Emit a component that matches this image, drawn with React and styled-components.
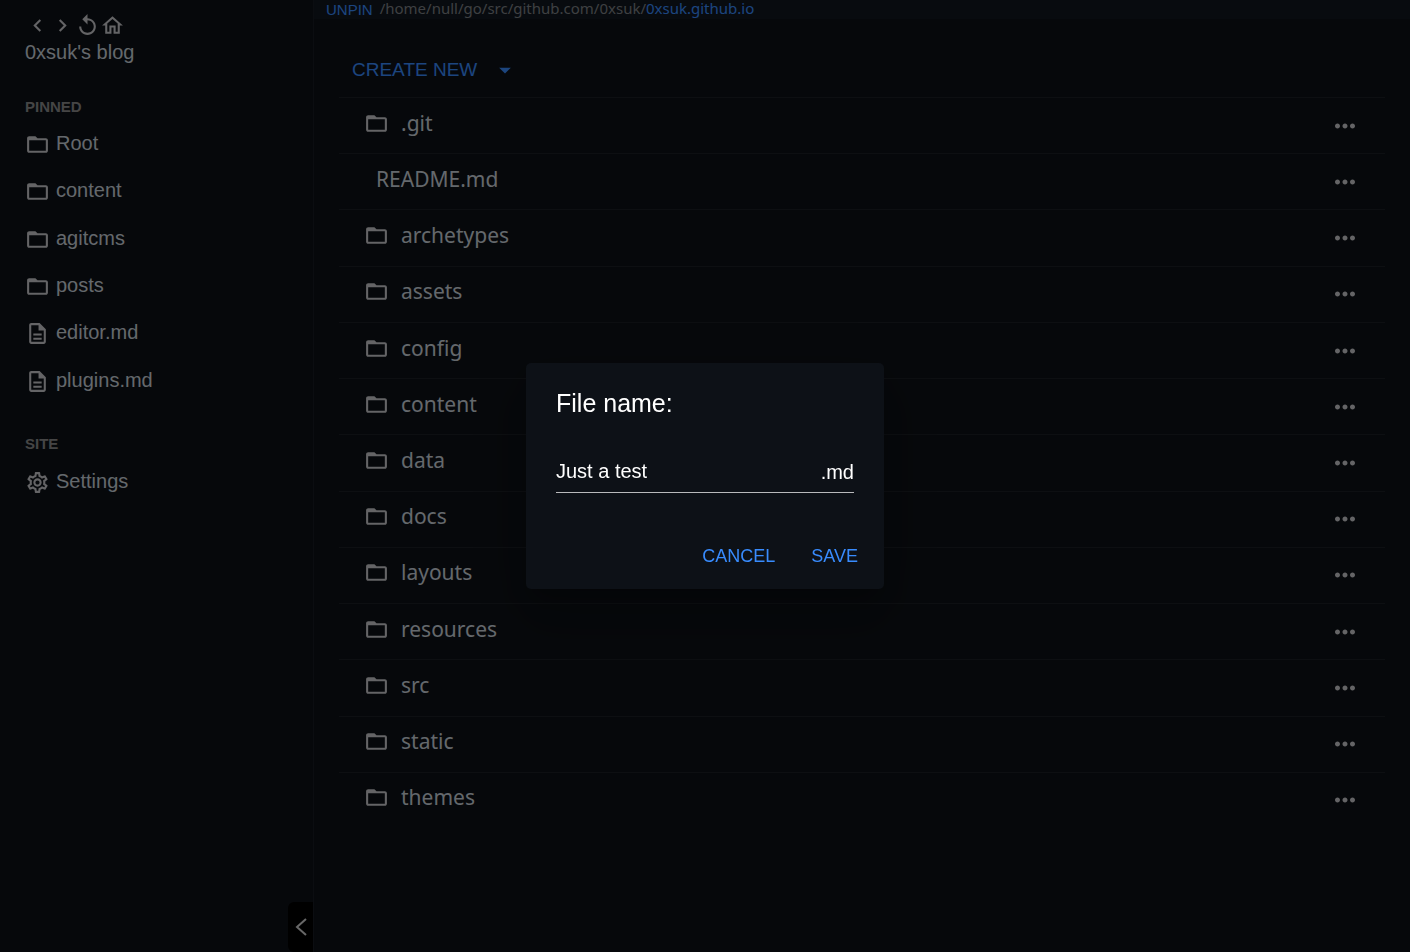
import React, { useState } from "react";
import styled, { createGlobalStyle } from "styled-components";
import {
  MdNavigateBefore,
  MdNavigateNext,
  MdReplay,
  MdOutlineHome,
  MdOutlineDescription,
  MdOutlineSettings,
  MdMoreHoriz,
  MdArrowDropDown,
} from "react-icons/md";

const sans = '"Liberation Sans", Arial, sans-serif';
const humanist = '"Noto Sans", sans-serif';

const GlobalStyle = createGlobalStyle`
  *, *::before, *::after { box-sizing: border-box; }
  body {
    margin: 0;
    background: #0d1117;
    color: #c9d1d9;
    font-family: ${sans};
    font-size: 20px;
  }
  a { color: inherit; text-decoration: none; }
  ul { list-style: none; margin: 0; padding: 0; }
  button {
    border: 0;
    padding: 0;
    background: none;
    color: inherit;
    font: inherit;
    cursor: pointer;
  }
  svg { display: block; flex: none; }
`;

const Layout = styled.div`
  display: flex;
  min-height: 100vh;
`;

const Sidebar = styled.aside`
  display: flex;
  flex-direction: column;
  flex: none;
  width: 314px;
  padding-top: 13px;
  border-right: 1px solid #161b22;
`;

const SidebarBody = styled.div`
  padding: 0 25px;
`;

const NavButtons = styled.div`
  display: flex;
  color: #c8c8cc;
`;

const SiteTitle = styled.div`
  padding-bottom: 1px;
  line-height: 28px;
`;

const SectionTitle = styled.h2`
  margin: 28px 0 1px;
  font-size: 15px;
  line-height: 24px;
  font-weight: bold;
  color: #8b8b8b;
`;

const LinkList = styled.ul`
  display: grid;
  grid-auto-rows: 1fr;
  min-height: ${(p) => p.$height}px;
`;

const SideLink = styled.a`
  display: flex;
  align-items: center;
  gap: 6px;
  height: 100%;

  svg {
    margin-top: 2px;
    color: #c8c8cc;
  }
`;

const CollapseButton = styled.button`
  display: flex;
  align-items: center;
  justify-content: center;
  align-self: flex-end;
  width: 25px;
  height: 50px;
  margin-top: auto;
  border-radius: 6px 0 0 6px;
  background: #000;
`;

const Main = styled.main`
  flex: 1;
  min-width: 0;
`;

const PathBar = styled.div`
  display: flex;
  align-items: center;
  height: 19px;
  padding-left: 12px;
  background: #11171e;
  font-family: ${humanist};
  font-size: 15px;
  line-height: 16px;
  color: #7d8085;
`;

const PathText = styled.span`
  padding-bottom: 3px;
`;

const PinButton = styled.button`
  margin-right: 7px;
  font-family: ${sans};
  font-size: 15px;
  line-height: 19px;
  color: #388bfd;
`;

const CurrentFolder = styled.a`
  padding-bottom: 3px;
  color: #388bfd;
`;

const Content = styled.div`
  padding: 30px 25px;
`;

const CreateButton = styled.button`
  display: flex;
  align-items: center;
  gap: 14px;
  height: 42px;
  margin-bottom: 6px;
  padding-left: 13px;
  font-size: 19px;
  color: #388bfd;
`;

const FileList = styled.ul`
  display: grid;
  grid-auto-rows: 1fr;
  min-height: 731px;
`;

const FileRow = styled.li`
  display: flex;
  align-items: center;
  justify-content: space-between;
  padding: 0 25px;
  border-top: 1px solid #1a1e24;
`;

const FileLink = styled.a`
  display: flex;
  align-items: center;
  flex: 1;
  padding-bottom: 5px;
  font-family: ${humanist};
  font-size: 21px;
  line-height: 30px;
`;

const FileName = styled.span`
  margin-left: 12px;
  padding-bottom: 1px;
`;

const MoreButton = styled.button`
  color: #c8c8cc;
`;

const Backdrop = styled.div`
  position: fixed;
  inset: 0;
  display: flex;
  align-items: center;
  justify-content: center;
  background: rgba(0, 0, 0, 0.5);
`;

const Dialog = styled.form`
  width: 358px;
  padding: 20px 18px 15px 30px;
  border-radius: 5px;
  background: #0d1117;
  color: #fff;
  box-shadow: 0 14px 19px -9px rgba(0, 0, 0, 0.2),
    0 30px 48px 4px rgba(0, 0, 0, 0.14), 0 11px 58px 10px rgba(0, 0, 0, 0.12);
`;

const DialogTitle = styled.label`
  display: block;
  font-size: 25px;
  line-height: 40px;
`;

const Field = styled.div`
  display: flex;
  align-items: center;
  height: 40px;
  margin: 30px 12px 0 0;
  border-bottom: 1px solid #b9babc;
`;

const NameInput = styled.input`
  flex: 1;
  min-width: 0;
  padding: 0 0 3px;
  border: 0;
  outline: 0;
  background: none;
  color: inherit;
  font: inherit;
`;

const Actions = styled.div`
  display: flex;
  justify-content: flex-end;
  gap: 20px;
  margin-top: 46px;
`;

const DialogButton = styled.button`
  height: 35px;
  padding: 0 8px;
  font-size: 18px;
  color: #388bfd;
`;

function FolderIcon({ size = 25 }) {
  return (
    <svg width={size} height={size} viewBox="0 0 24 24" fill="#c8c8cc" aria-hidden="true">
      <path d="M20 6h-8l-2-2H4c-1.1 0-1.99.9-1.99 2L2 18c0 1.1.9 2 2 2h16c1.1 0 2-.9 2-2V8c0-1.1-.9-2-2-2zm0 12H4V8h16v10z" />
    </svg>
  );
}

const pinned = [
  { name: "Root", icon: FolderIcon },
  { name: "content", icon: FolderIcon },
  { name: "agitcms", icon: FolderIcon },
  { name: "posts", icon: FolderIcon },
  { name: "editor.md", icon: MdOutlineDescription },
  { name: "plugins.md", icon: MdOutlineDescription },
];

const files = [
  { name: ".git", folder: true },
  { name: "README.md", folder: false },
  { name: "archetypes", folder: true },
  { name: "assets", folder: true },
  { name: "config", folder: true },
  { name: "content", folder: true },
  { name: "data", folder: true },
  { name: "docs", folder: true },
  { name: "layouts", folder: true },
  { name: "resources", folder: true },
  { name: "src", folder: true },
  { name: "static", folder: true },
  { name: "themes", folder: true },
];

function SidebarItem({ name, icon: Icon }) {
  return (
    <li>
      <SideLink href="#">
        <Icon size={25} />
        {name}
      </SideLink>
    </li>
  );
}

function NewFileDialog() {
  const [name, setName] = useState("Just a test");
  return (
    <Backdrop>
      <Dialog
        role="dialog"
        aria-modal="true"
        aria-labelledby="file-name-label"
        onSubmit={(e) => e.preventDefault()}
      >
        <DialogTitle id="file-name-label" htmlFor="file-name">
          File name:
        </DialogTitle>
        <Field>
          <NameInput
            id="file-name"
            type="text"
            autoComplete="off"
            spellCheck={false}
            value={name}
            onChange={(e) => setName(e.target.value)}
          />
          <span>.md</span>
        </Field>
        <Actions>
          <DialogButton type="button">CANCEL</DialogButton>
          <DialogButton type="submit">SAVE</DialogButton>
        </Actions>
      </Dialog>
    </Backdrop>
  );
}

export default function App() {
  return (
    <>
      <GlobalStyle />
      <Layout>
        <Sidebar>
          <SidebarBody>
            <NavButtons>
              <button aria-label="Back"><MdNavigateBefore size={25} /></button>
              <button aria-label="Forward"><MdNavigateNext size={25} /></button>
              <button aria-label="Reload"><MdReplay size={25} /></button>
              <button aria-label="Home"><MdOutlineHome size={25} /></button>
            </NavButtons>
            <SiteTitle>0xsuk's blog</SiteTitle>
            <SectionTitle>PINNED</SectionTitle>
            <LinkList $height={284}>
              {pinned.map((item) => (
                <SidebarItem key={item.name} {...item} />
              ))}
            </LinkList>
            <SectionTitle>SITE</SectionTitle>
            <LinkList $height={48}>
              <SidebarItem name="Settings" icon={MdOutlineSettings} />
            </LinkList>
          </SidebarBody>
          <CollapseButton aria-label="Collapse sidebar">
            <svg width="12" height="18" viewBox="0 0 12 18" fill="none" stroke="#d0d0d0" strokeWidth="2">
              <path d="M11 1 L2 9 L11 17" />
            </svg>
          </CollapseButton>
        </Sidebar>
        <Main>
          <PathBar>
            <PinButton>UNPIN</PinButton>
            <PathText>/home/null/go/src/github.com/0xsuk/</PathText>
            <CurrentFolder href="#">0xsuk.github.io</CurrentFolder>
          </PathBar>
          <Content>
            <CreateButton>
              CREATE NEW
              <MdArrowDropDown size={28} />
            </CreateButton>
            <FileList>
              {files.map(({ name, folder }) => (
                <FileRow key={name}>
                  <FileLink href="#">
                    {folder && <FolderIcon />}
                    <FileName>{name}</FileName>
                  </FileLink>
                  <MoreButton aria-label={`Actions for ${name}`}>
                    <MdMoreHoriz size={30} />
                  </MoreButton>
                </FileRow>
              ))}
            </FileList>
          </Content>
        </Main>
      </Layout>
      <NewFileDialog />
    </>
  );
}
